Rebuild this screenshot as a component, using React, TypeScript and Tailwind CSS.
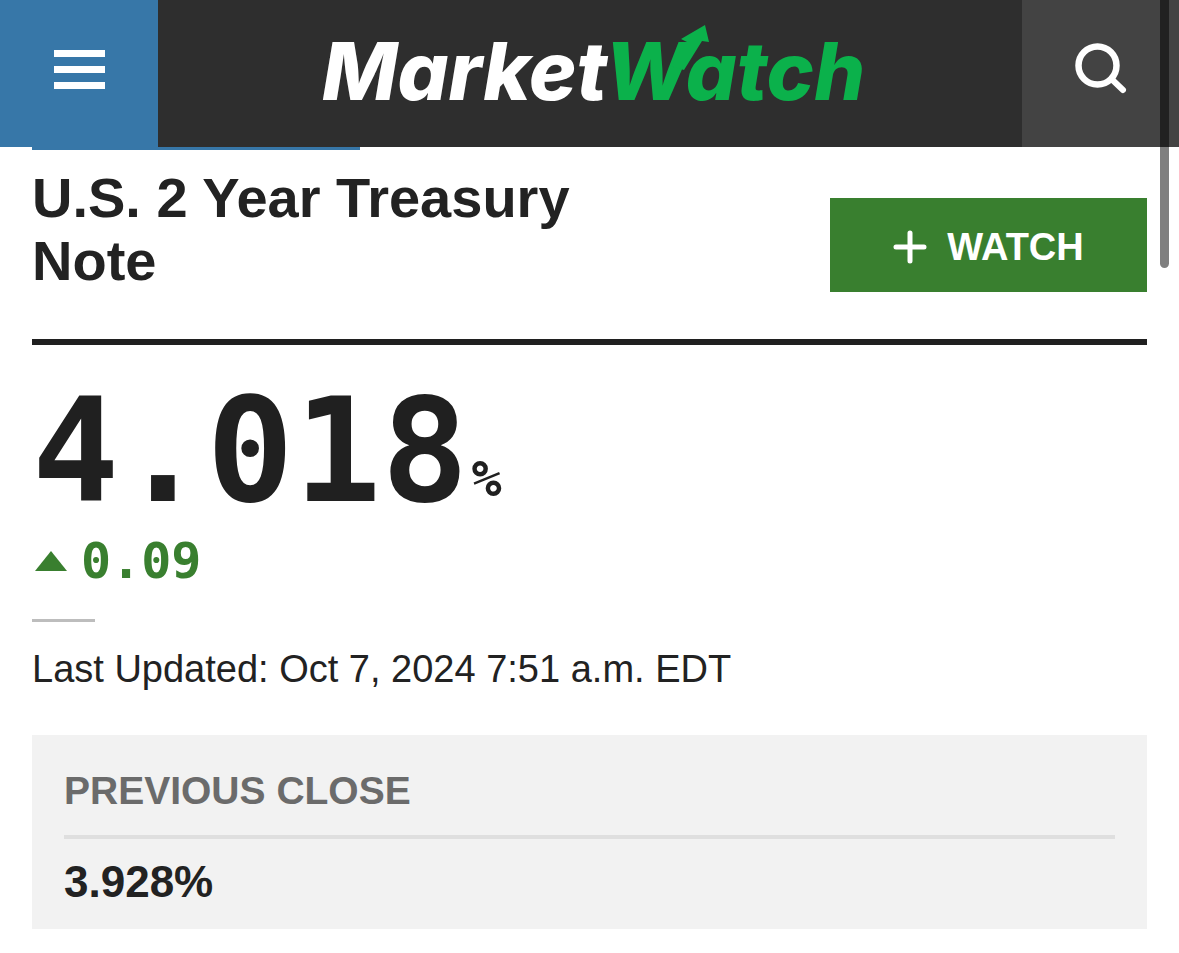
function Logo() {
  return (
    <svg viewBox="0 0 580 116" className="h-[116px] w-[580px] max-w-full" role="img" aria-label="MarketWatch">
      <g
        className="font-extrabold italic [font-feature-settings:'cv11'_1]"
        fontFamily="Inter, sans-serif"
        fontSize="80"
      >
        <text x="22" y="90" fill="#ffffff">Market</text>
        <text x="305" y="90" fill="#0bb14b">Watch</text>
      </g>
      <path d="M381 29 L405 15 L409 32 L402 31 L384 60 L370 56 L387 32 Z" fill="#0bb14b" />
    </svg>
  );
}

function Header() {
  return (
    <header className="grid h-[147px] grid-cols-[158px_1fr_157px] bg-[#2e2e2e]">
      <button type="button" aria-label="Menu" className="flex flex-col items-center gap-[9px] bg-[#3777a8] pt-[50px]">
        <span className="h-[7px] w-[51px] bg-white" />
        <span className="h-[7px] w-[51px] bg-white" />
        <span className="h-[7px] w-[51px] bg-white" />
      </button>
      <a href="#home" className="flex items-start justify-center pt-[10px]">
        <Logo />
      </a>
      <button type="button" aria-label="Search" className="flex items-start justify-center bg-[#434343] pt-[42px]">
        <svg viewBox="0 0 54 54" className="size-[54px]" fill="none" stroke="#ffffff">
          <circle cx="23.5" cy="23.5" r="19" strokeWidth="6.5" />
          <path d="M38 37.500 L49 48" strokeWidth="6" strokeLinecap="round" />
        </svg>
      </button>
    </header>
  );
}

export default function App() {
  return (
    <div className="relative min-h-screen bg-white font-['Liberation_Sans',Arial,sans-serif] text-[#222222]">
      <Header />
      <main className="px-8">
        <div className="h-[3px] w-[328px] bg-[#3777a8]" />
        <div className="flex items-end justify-between border-b-[6px] border-[#202020] pt-4 pb-[47px]">
          <h1 className="max-w-[60%] text-[56px] leading-[63px] font-bold">U.S. 2 Year Treasury Note</h1>
          <button
            type="button"
            className="flex h-[94px] w-[317px] items-center justify-center gap-5 bg-[#397f2f] pt-1 text-[38px] leading-[48px] font-bold text-white"
          >
            <svg viewBox="0 0 34 34" className="size-[34px]" stroke="#ffffff" strokeWidth="5" strokeLinecap="round" aria-hidden="true">
              <path d="M3 17H31M17 3V31" />
            </svg>
            WATCH
          </button>
        </div>

        <div className="mt-[34px] flex items-end gap-[3px] font-['DejaVu_Sans_Mono',monospace] font-bold text-[#202020]">
          <span className="text-[145px] leading-[144px]">4.018</span>
          <span className="pb-[14px] text-[50px] leading-[60px]">%</span>
        </div>
        <div className="mt-2 flex items-center gap-[14px] pl-[3px] font-['DejaVu_Sans_Mono',monospace] text-[50px] leading-[60px] font-bold text-[#397f2f]">
          <svg viewBox="0 0 32 20" className="h-5 w-8" fill="currentColor" aria-hidden="true">
            <path d="M16 0L32 20H0Z" />
          </svg>
          <span>0.09</span>
        </div>

        <div className="mt-7 h-[3px] w-[63px] bg-[#bdbdbd]" />
        <p className="mt-[23px] text-[38px] leading-[48px]">Last Updated: Oct 7, 2024 7:51 a.m. EDT</p>

        <section className="mt-[42px] bg-[#f2f2f2] px-8 pt-8 pb-5">
          <h2 className="border-b-4 border-[#dfdfdf] pb-5 text-[39px] leading-[48px] font-bold text-[#6b6b6b]">PREVIOUS CLOSE</h2>
          <p className="mt-4 text-[44px] leading-[54px] font-bold">3.928%</p>
        </section>
      </main>
      <div className="absolute top-0 right-[10px] h-[268px] w-[9px] rounded-b-full bg-black/50" aria-hidden="true" />
    </div>
  );
}
